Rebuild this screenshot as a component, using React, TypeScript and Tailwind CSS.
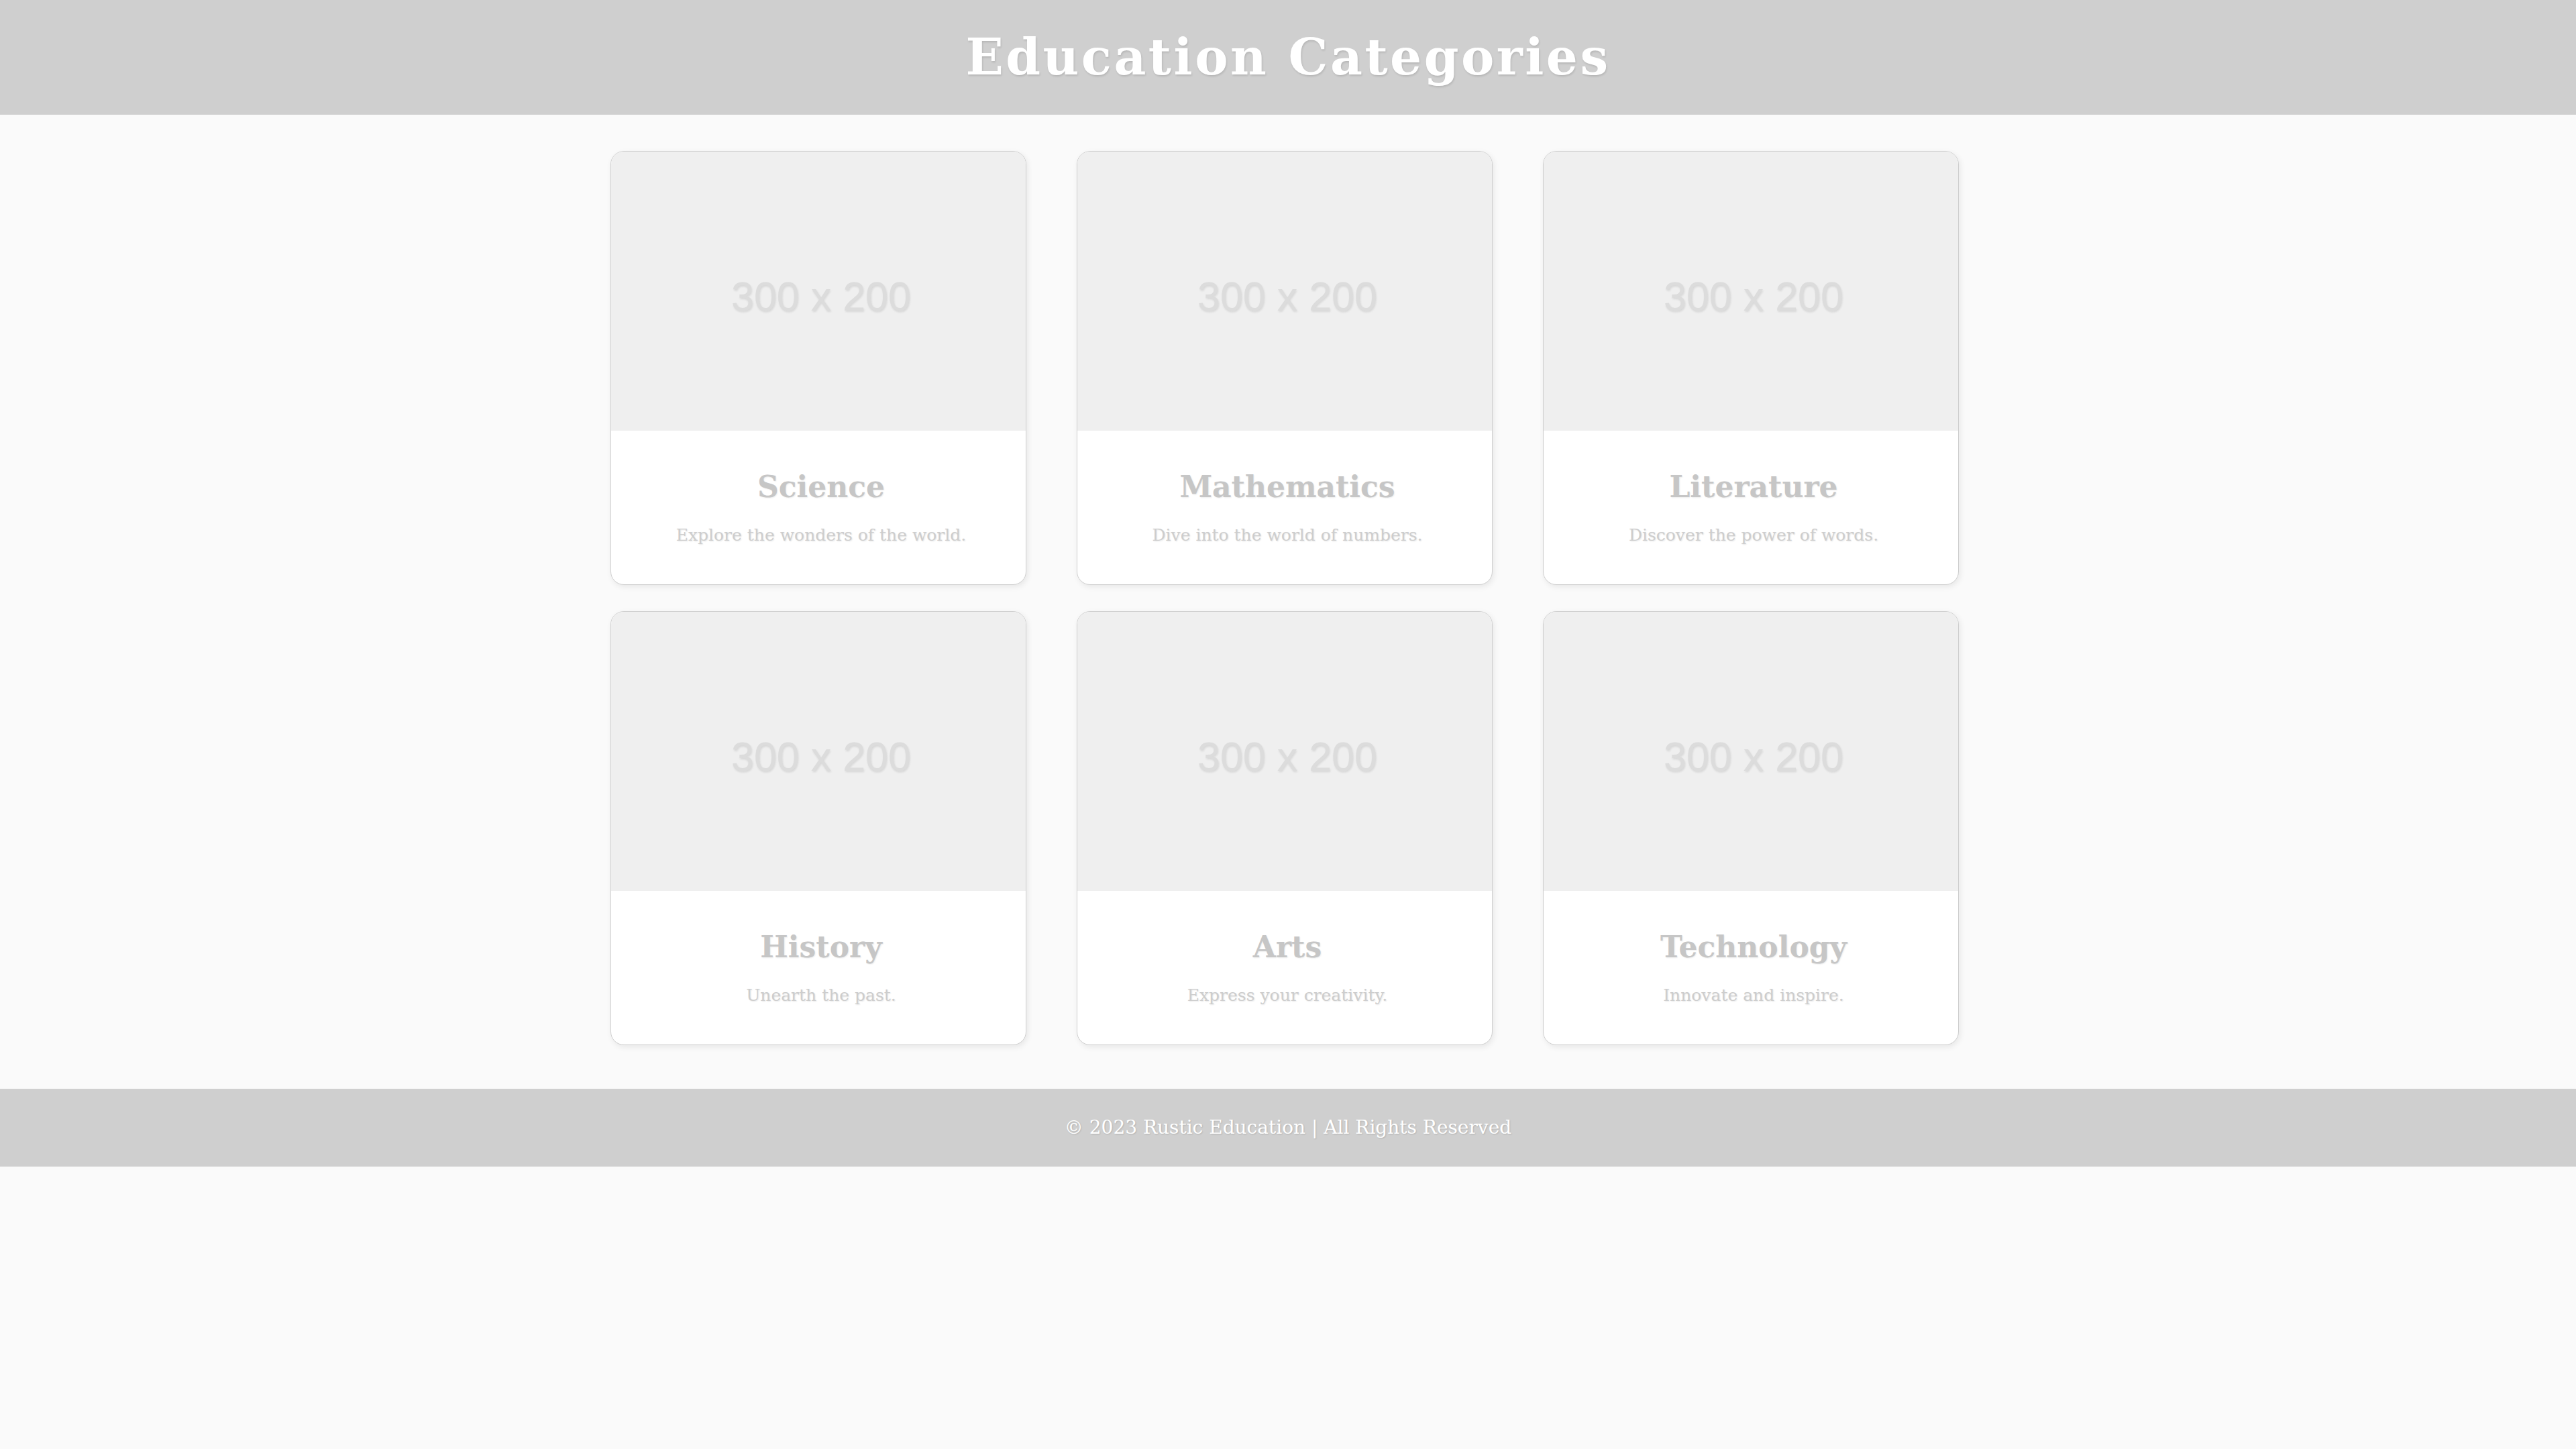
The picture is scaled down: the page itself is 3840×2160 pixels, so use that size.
const categories = [
  { title: 'Science', text: 'Explore the wonders of the world.' },
  { title: 'Mathematics', text: 'Dive into the world of numbers.' },
  { title: 'Literature', text: 'Discover the power of words.' },
  { title: 'History', text: 'Unearth the past.' },
  { title: 'Arts', text: 'Express your creativity.' },
  { title: 'Technology', text: 'Innovate and inspire.' },
];

function CategoryCard({ title, text }: { title: string; text: string }) {
  return (
    <div className="w-[620px] h-[647px] bg-white border border-[#cfcfcf] rounded-[20px] overflow-hidden shadow-[2px_3px_8px_rgba(0,0,0,0.08)] flex flex-col">
      <div className="h-[416px] bg-[#efefef] flex items-center justify-center pt-[18px] pl-[8px]">
        <span className="font-['Liberation_Sans',Arial,sans-serif] text-[61px] text-[#dcdcdc] [text-shadow:1px_2px_3px_rgba(0,0,0,0.1)]">
          300 x 200
        </span>
      </div>
      <div className="flex-1 flex flex-col items-center pt-[52px] pl-[8px]">
        <h2 className="font-['DejaVu_Serif',Georgia,serif] font-bold text-[44px] leading-[64px] text-[#c6c6c6] [text-shadow:1px_1px_2px_rgba(0,0,0,0.08)]">
          {title}
        </h2>
        <p className="mt-[22px] font-['DejaVu_Serif',Georgia,serif] text-[25px] leading-[36px] text-[#cdcdcd] [text-shadow:1px_1px_2px_rgba(0,0,0,0.1)]">
          {text}
        </p>
      </div>
    </div>
  );
}

export default function App() {
  return (
    <div className="min-h-[2160px] bg-[#fafafa] font-['DejaVu_Serif',Georgia,serif]">
      <header className="h-[171px] bg-[#cfcfcf] flex items-center justify-center">
        <h1 className="text-[74px] font-bold tracking-[3.5px] text-white [text-shadow:1px_2px_3px_rgba(0,0,0,0.12)]">
          Education Categories
        </h1>
      </header>

      <main className="pt-[54px] pb-[65px] pr-[10px] flex justify-center">
        <div className="grid grid-cols-3 gap-x-[75px] gap-y-[39px]">
          {categories.map((c) => (
            <CategoryCard key={c.title} title={c.title} text={c.text} />
          ))}
        </div>
      </main>

      <footer className="h-[116px] bg-[#cfcfcf] flex items-center justify-center">
        <p className="text-[28px] text-white [text-shadow:1px_1px_2px_rgba(0,0,0,0.15)]">
          © 2023 Rustic Education | All Rights Reserved
        </p>
      </footer>
    </div>
  );
}
